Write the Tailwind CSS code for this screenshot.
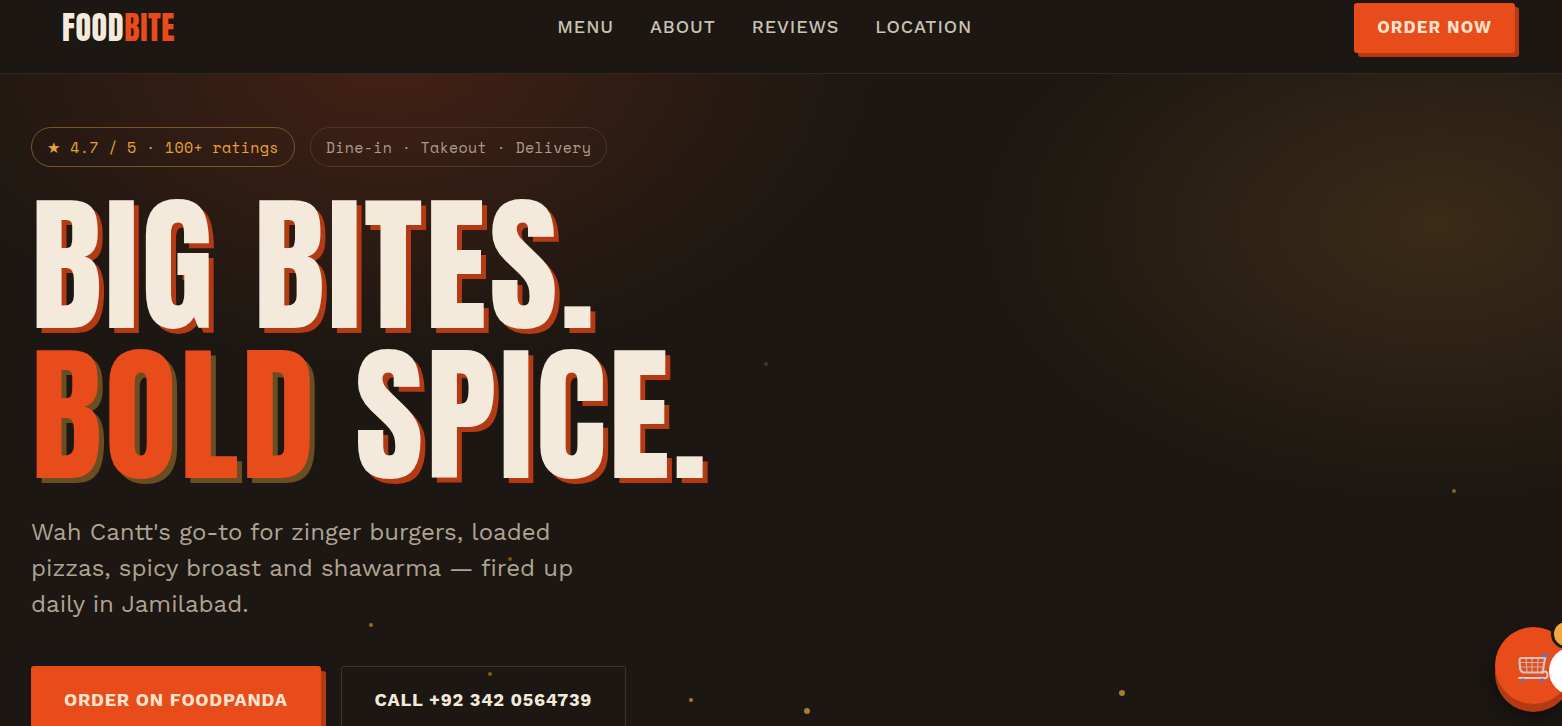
<!DOCTYPE html>
<html lang="en">
<head>
  <meta charset="UTF-8" />
  <meta name="viewport" content="width=device-width, initial-scale=1.0"/>
  <title>FoodBite</title>
  <script src="https://cdn.jsdelivr.net/npm/@tailwindcss/browser@4"></script>
  <style>
    body { font-family: "Work Sans", "Noto Sans", sans-serif; }
    .display { font-family: "Anton", "Liberation Sans Narrow", sans-serif; }
    .mono { font-family: "Space Mono", "Liberation Mono", monospace; }
    .glow {
      background:
        radial-gradient(ellipse 480px 310px at 25% -20px, #442114 0%, #44211400 100%),
        radial-gradient(ellipse 450px 270px at 92% 152px, #3b2b17 0%, #3b2b1700 100%);
    }
  </style>
</head>
<body class="flex h-screen flex-col overflow-hidden bg-[#1c1712] text-[#f4eadb]">

  <!-- Nav -->
  <header class="flex items-center justify-between border-b border-[#2f2822] pt-[3px] pb-5 pl-[62px] pr-[47px]">
    <a href="#" class="display text-[32px] leading-[50px] tracking-[0.02em]">FOOD<span class="text-[#e84c1a]">BITE</span></a>
    <nav class="flex gap-9 pb-[3px] text-[18px] font-medium tracking-wider text-[#cbc2b6]">
      <a href="#menu">MENU</a>
      <a href="#about">ABOUT</a>
      <a href="#reviews">REVIEWS</a>
      <a href="#location">LOCATION</a>
    </nav>
    <button class="h-[50px] rounded-[3px] bg-[#e84c1a] px-[23px] text-[17px] font-bold tracking-[0.06em] text-[#fbe3cd] shadow-[4px_4px_0_#b33a12]">ORDER NOW</button>
  </header>

  <!-- Hero -->
  <main class="glow flex-1 px-[31px] pt-[53px]">
    <div class="mono flex gap-[15px] text-[15px] tracking-[0.02em]">
      <span class="rounded-full border border-[#7a5424] px-[15px] leading-[38px] text-[#e9a23b]"><span class="font-['DejaVu_Sans'] leading-none">★</span> 4.7 / 5 · 100+ ratings</span>
      <span class="rounded-full border border-[#4a372b] px-[15px] leading-[38px] text-[#aa9c8d]">Dine-in · Takeout · Delivery</span>
    </div>

    <h1 class="display mt-6 text-[148px] leading-[150px] tracking-[0.02em] whitespace-nowrap [text-shadow:5px_5px_0_#b33a12]">BIG BITES.<br><span class="text-[#e84c1a] [text-shadow:5px_5px_0_#6b4d22]">BOLD</span> SPICE.</h1>

    <p class="mt-[23px] max-w-[560px] text-[24px] leading-[36px] text-[#b1a393]">Wah Cantt's go-to for zinger burgers, loaded pizzas, spicy broast and shawarma — fired up daily in Jamilabad.</p>

    <div class="mt-[44px] flex gap-5 text-[18px] font-bold tracking-[0.04em]">
      <button class="h-[67px] rounded-[3px] bg-[#e84c1a] px-[33px] text-[#fbe3cd] shadow-[5px_5px_0_#b33a12]">ORDER ON FOODPANDA</button>
      <a href="tel:+923420564739" class="h-[67px] rounded-[3px] border border-[#3a342e] px-[33px] leading-[65px]">CALL +92 342 0564739</a>
    </div>
  </main>

  <!-- Floating embers -->
  <svg class="pointer-events-none fixed inset-0 h-full w-full" fill="#a87a38">
    <circle cx="766" cy="364" r="2" fill="#3b3730"/>
    <circle cx="1454" cy="491" r="2" fill="#8a6020"/>
    <circle cx="510" cy="559" r="2" fill="#7a5016"/>
    <circle cx="371" cy="625" r="2" fill="#906c34"/>
    <circle cx="490" cy="674" r="2" fill="#8a5c18"/>
    <circle cx="691" cy="700" r="2"/>
    <circle cx="807" cy="711" r="3"/>
    <circle cx="1122" cy="693" r="3"/>
  </svg>

  <!-- Cart -->
  <button aria-label="Cart" class="fixed right-[-10px] bottom-[22px] size-[77px] rounded-full bg-[#e84c1a] shadow-[0_8px_0_#b33a12,0_12px_24px_#00000080]">
    <svg class="absolute top-[26px] left-[23px] h-[31px] w-[32px]" viewBox="0 0 32 31" fill="none">
      <path d="M3 9.500H27M3 14H26M8 5L9 19M14 5V19M20 5L19.500 19" stroke="#cbb0ab" stroke-width="1.200"/>
      <path d="M27.500 3L24.500 19.500H6Q2.500 19 2 15L1.500 7Q1.500 5 4 5H26" stroke="#cfc3c5" stroke-width="2.200" stroke-linejoin="round"/>
      <path d="M24 19.500Q29 17 29.500 21.500T25 25H1" stroke="#dccfce" stroke-width="2" stroke-linecap="round"/>
      <path d="M25.500 2.500H30" stroke="#6c6fa3" stroke-width="3" stroke-linecap="round"/>
      <circle cx="5" cy="27.500" r="2.200" fill="#7b6c9c"/>
      <circle cx="24" cy="27.500" r="2.200" fill="#7b6c9c"/>
    </svg>
    <span class="absolute top-[-8px] right-[-9px] size-[30px] rounded-full border-3 border-[#1c1712] bg-[#efa93f] text-[12px] leading-[24px] font-bold text-[#1c1712]">0</span>
  </button>
  <div class="fixed right-[-35px] bottom-[31px] size-[48px] rounded-full bg-white"></div>
</body>
</html>
